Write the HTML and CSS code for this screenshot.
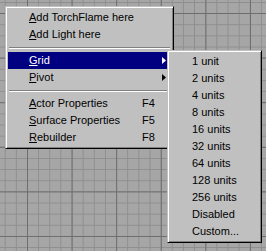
FILE: index.html
```html
<!DOCTYPE html>
<html>
<head>
<title>Viewport menu</title>
<link rel="stylesheet" href="styles.css">
</head>
<body>

<div id="viewport">

  <!-- Main context menu -->
  <div class="menu main-menu">
    <div class="menu-item"><span class="label"><u>A</u>dd TorchFlame here</span></div>
    <div class="menu-item"><span class="label"><u>A</u>dd Light here</span></div>
    <div class="separator"></div>
    <div class="menu-item active">
      <span class="label"><u>G</u>rid</span>
      <svg class="arrow" width="4" height="7" viewBox="0 0 4 7"><path d="M0 0 L4 3.5 L0 7 Z"/></svg>
    </div>
    <div class="menu-item">
      <span class="label"><u>P</u>ivot</span>
      <svg class="arrow" width="4" height="7" viewBox="0 0 4 7"><path d="M0 0 L4 3.5 L0 7 Z"/></svg>
    </div>
    <div class="separator"></div>
    <div class="menu-item"><span class="label"><u>A</u>ctor Properties</span><span class="key">F4</span></div>
    <div class="menu-item"><span class="label"><u>S</u>urface Properties</span><span class="key">F5</span></div>
    <div class="menu-item"><span class="label"><u>R</u>ebuilder</span><span class="key">F8</span></div>
  </div>

  <!-- Grid submenu -->
  <div class="menu sub-menu">
    <div class="menu-item"><span class="label">1 unit</span></div>
    <div class="menu-item"><span class="label">2 units</span></div>
    <div class="menu-item"><span class="label">4 units</span></div>
    <div class="menu-item"><span class="label">8 units</span></div>
    <div class="menu-item"><span class="label">16 units</span></div>
    <div class="menu-item"><span class="label">32 units</span></div>
    <div class="menu-item"><span class="label">64 units</span></div>
    <div class="menu-item"><span class="label">128 units</span></div>
    <div class="menu-item"><span class="label">256 units</span></div>
    <div class="menu-item"><span class="label">Disabled</span></div>
    <div class="menu-item"><span class="label">Custom...</span></div>
  </div>

</div>

</body>
</html>
```

FILE: styles.css
```css
body {
  margin: 0;
  font-family: "Liberation Sans", Arial, sans-serif;
  font-size: 11px;
}

/* Editor viewport with the grid drawn on it */
#viewport {
  position: relative;
  width: 266px;
  height: 251px;
  overflow: hidden;
  background-color: #a6a6a6;
  background-image:
    linear-gradient(to right, #6e6e6e 1px, transparent 1px),
    linear-gradient(to bottom, #6e6e6e 1px, transparent 1px),
    linear-gradient(to right, #8e8e8e 1px, transparent 1px),
    linear-gradient(to bottom, #8e8e8e 1px, transparent 1px);
  background-size: 44.6px 100%, 100% 44.6px, 11.15px 100%, 100% 11.15px;
  background-position: 27px 0, 0 13px, 4.7px 0, 0 2px;
}

/* Classic 3D popup menu */
.menu {
  position: absolute;
  background-color: #c0c0c0;
  border: 1px solid;
  border-color: #c0c0c0 #000 #000 #c0c0c0;
  box-shadow: inset 1px 1px #fff, inset -1px -1px #808080;
  padding: 2px;
}

.main-menu {
  left: 5px;
  top: 6px;
  width: 163px;
}

.sub-menu {
  left: 167px;
  top: 50px;
  width: 89px;
}

.menu-item {
  display: flex;
  align-items: center;
  height: 17px;
  line-height: 17px;
  padding-left: 21px;
  color: #000;
  white-space: nowrap;
}

.sub-menu .menu-item {
  padding-left: 22px;
}

.menu-item .label {
  flex: 1;
}

.menu-item .key {
  width: 29px;
}

.menu-item .arrow {
  margin-right: 5px;
  fill: #000;
}

.menu-item.active {
  background-color: #000080;
  color: #fff;
}

.menu-item.active .arrow {
  fill: #fff;
}

.separator {
  height: 9px;
  display: flex;
  align-items: center;
}

.separator::before {
  content: "";
  flex: 1;
  margin: 0 1px;
  height: 0;
  border-top: 1px solid #808080;
  border-bottom: 1px solid #fff;
}
```
